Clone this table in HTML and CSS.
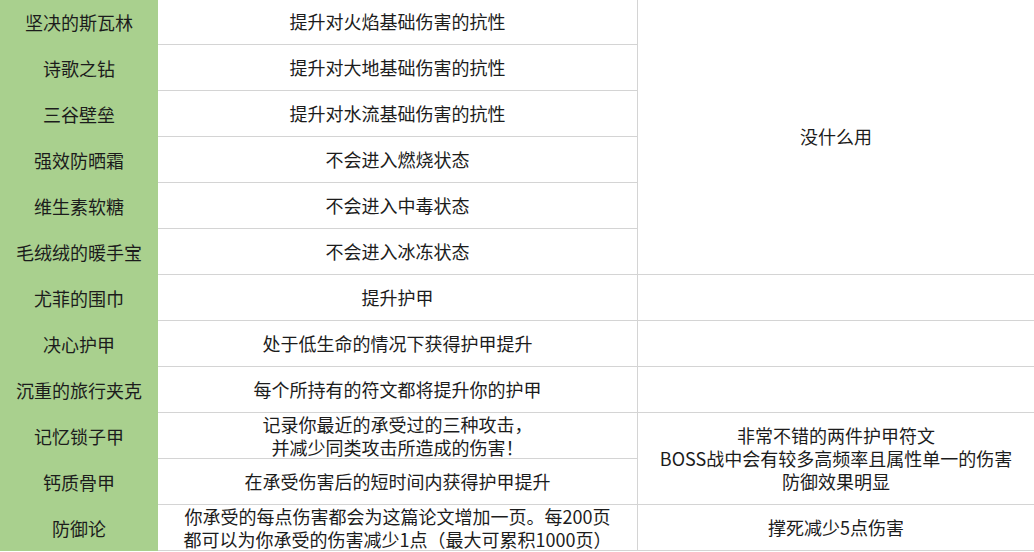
FILE: index.html
```html
<!DOCTYPE html>
<html lang="zh-CN">
<head>
<meta charset="utf-8">
<title>护甲符文</title>
<link rel="stylesheet" href="styles.css">
</head>
<body>
<div class="sheet">
  <div class="cell name">坚决的斯瓦林</div>
  <div class="cell desc">提升对火焰基础伤害的抗性</div>
  <div class="cell note span6">没什么用</div>

  <div class="cell name">诗歌之钻</div>
  <div class="cell desc">提升对大地基础伤害的抗性</div>

  <div class="cell name">三谷壁垒</div>
  <div class="cell desc">提升对水流基础伤害的抗性</div>

  <div class="cell name">强效防晒霜</div>
  <div class="cell desc">不会进入燃烧状态</div>

  <div class="cell name">维生素软糖</div>
  <div class="cell desc">不会进入中毒状态</div>

  <div class="cell name">毛绒绒的暖手宝</div>
  <div class="cell desc">不会进入冰冻状态</div>

  <div class="cell name">尤菲的围巾</div>
  <div class="cell desc">提升护甲</div>
  <div class="cell note"></div>

  <div class="cell name">决心护甲</div>
  <div class="cell desc">处于低生命的情况下获得护甲提升</div>
  <div class="cell note"></div>

  <div class="cell name">沉重的旅行夹克</div>
  <div class="cell desc">每个所持有的符文都将提升你的护甲</div>
  <div class="cell note"></div>

  <div class="cell name">记忆锁子甲</div>
  <div class="cell desc">记录你最近的承受过的三种攻击，<br>并减少同类攻击所造成的伤害！</div>
  <div class="cell note span2">非常不错的两件护甲符文<br>BOSS战中会有较多高频率且属性单一的伤害<br>防御效果明显</div>

  <div class="cell name">钙质骨甲</div>
  <div class="cell desc">在承受伤害后的短时间内获得护甲提升</div>

  <div class="cell name">防御论</div>
  <div class="cell desc">你承受的每点伤害都会为这篇论文增加一页。每200页<br>都可以为你承受的伤害减少1点（最大可累积1000页）</div>
  <div class="cell note">撑死减少5点伤害</div>
</div>
</body>
</html>
```

FILE: styles.css
```css
html, body {
  margin: 0;
  padding: 0;
  background: #ffffff;
}

body {
  width: 1034px;
  height: 552px;
  overflow: hidden;
  font-family: "Noto Sans CJK SC", "Noto Sans", sans-serif;
  font-size: 18px;
  color: #1c1c1c;
}

.sheet {
  display: grid;
  grid-template-columns: 158px 480px 396px;
  grid-auto-rows: 46px;
  margin-top: -1px;
}

.cell {
  display: flex;
  align-items: center;
  justify-content: center;
  text-align: center;
  box-sizing: border-box;
  line-height: 23px;
  white-space: nowrap;
}

.name {
  grid-column: 1;
  background: #a9d08e;
}

.desc {
  grid-column: 2;
  border-bottom: 1px solid #d4d4d4;
  border-right: 1px solid #d4d4d4;
}

.note {
  grid-column: 3;
  border-bottom: 1px solid #d4d4d4;
}

.span6 {
  grid-row: span 6;
}

.span2 {
  grid-row: span 2;
}
```
